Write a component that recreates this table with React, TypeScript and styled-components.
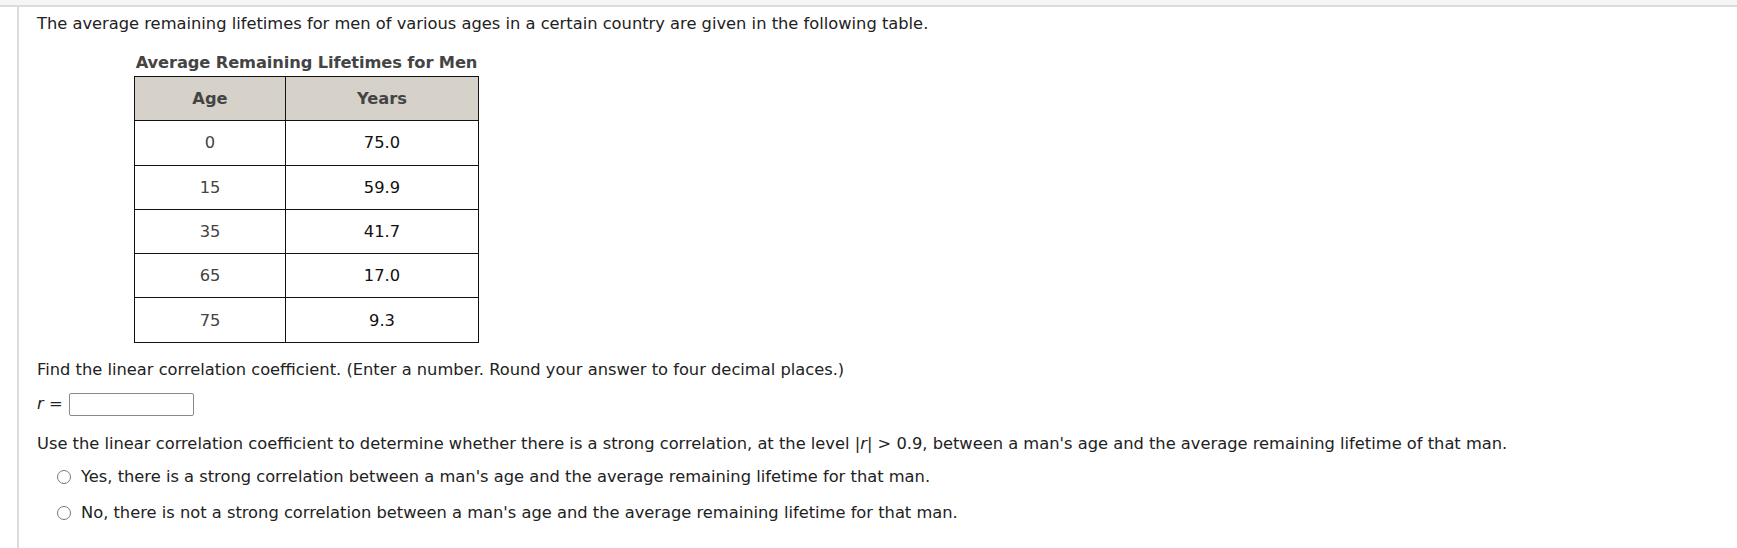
import styled, { createGlobalStyle } from "styled-components";

const GlobalStyle = createGlobalStyle`
  html, body {
    margin: 0;
    padding: 0;
    background: #fff;
  }
  body {
    font-family: "DejaVu Sans", Verdana, sans-serif;
    font-size: 16.3px;
    color: #222;
  }
`;

const TopBar = styled.div`
  height: 5px;
  background: #f5f5f5;
  border-bottom: 2px solid #dcdcdc;
`;

const Question = styled.div`
  margin-left: 17px;
  border-left: 2px solid #dcdcdc;
  padding: 7px 0 0 18px;
  min-height: calc(100vh - 7px);
  box-sizing: border-box;
`;

const Text = styled.p`
  margin: 0;
  line-height: 20px;
`;

const DataTable = styled.table`
  margin: 19px 0 0 97px;
  border-collapse: collapse;
  table-layout: fixed;
  width: 342px;
`;

const Caption = styled.caption`
  font-weight: bold;
  color: #444;
  line-height: 20px;
  padding-bottom: 3px;
  white-space: nowrap;
  letter-spacing: -0.12px;
`;

const HeadCell = styled.th<{ $w: number }>`
  width: ${(p) => p.$w}px;
  height: 43.3px;
  background: #d6d2c9;
  border: 1px solid #111;
  color: #444;
  font-weight: bold;
  text-align: center;
  padding: 0;
`;

const Cell = styled.td<{ $dim?: boolean }>`
  height: 43.3px;
  border: 1px solid #111;
  text-align: center;
  color: ${(p) => (p.$dim ? "#444" : "#111")};
  padding: 0;
`;

const Section = styled.div<{ $top: number }>`
  margin-top: ${(p) => p.$top}px;
`;

const AnswerRow = styled.div`
  display: flex;
  align-items: center;
  gap: 6px;
  margin-top: 13px;
`;

const Var = styled.i`
  font-family: "DejaVu Sans", Verdana, sans-serif;
`;

const Input = styled.input`
  width: 125px;
  height: 23px;
  box-sizing: border-box;
  border: 1px solid #8a8a8a;
  border-radius: 2px;
  margin: 0;
  padding: 0 4px;
`;

const Options = styled.div`
  display: flex;
  flex-direction: column;
  gap: 16px;
  margin: 13px 0 0 20px;
`;

const Option = styled.label`
  display: flex;
  align-items: center;
  gap: 10px;
  line-height: 20px;
`;

const Radio = styled.span`
  width: 12px;
  height: 12px;
  border: 1.5px solid #777;
  border-radius: 50%;
  flex: none;
`;

const rows: [string, string][] = [
  ["0", "75.0"],
  ["15", "59.9"],
  ["35", "41.7"],
  ["65", "17.0"],
  ["75", "9.3"],
];

export default function App() {
  return (
    <>
      <GlobalStyle />
      <TopBar />
      <Question>
        <Text>
          The average remaining lifetimes for men of various ages in a certain country are given in the
          following table.
        </Text>
        <DataTable>
          <Caption>Average Remaining Lifetimes for Men</Caption>
          <thead>
            <tr>
              <HeadCell $w={150}>Age</HeadCell>
              <HeadCell $w={192}>Years</HeadCell>
            </tr>
          </thead>
          <tbody>
            {rows.map(([age, years]) => (
              <tr key={age}>
                <Cell $dim>{age}</Cell>
                <Cell>{years}</Cell>
              </tr>
            ))}
          </tbody>
        </DataTable>
        <Section $top={17}>
          <Text>
            Find the linear correlation coefficient. (Enter a number. Round your answer to four decimal
            places.)
          </Text>
          <AnswerRow>
            <Text>
              <Var>r</Var> =
            </Text>
            <Input type="text" />
          </AnswerRow>
        </Section>
        <Section $top={18}>
          <Text>
            Use the linear correlation coefficient to determine whether there is a strong correlation, at the
            level |<Var>r</Var>| &gt; 0.9, between a man's age and the average remaining lifetime of that man.
          </Text>
          <Options>
            <Option>
              <Radio />
              Yes, there is a strong correlation between a man's age and the average remaining lifetime for
              that man.
            </Option>
            <Option>
              <Radio />
              No, there is not a strong correlation between a man's age and the average remaining lifetime
              for that man.
            </Option>
          </Options>
        </Section>
      </Question>
    </>
  );
}
